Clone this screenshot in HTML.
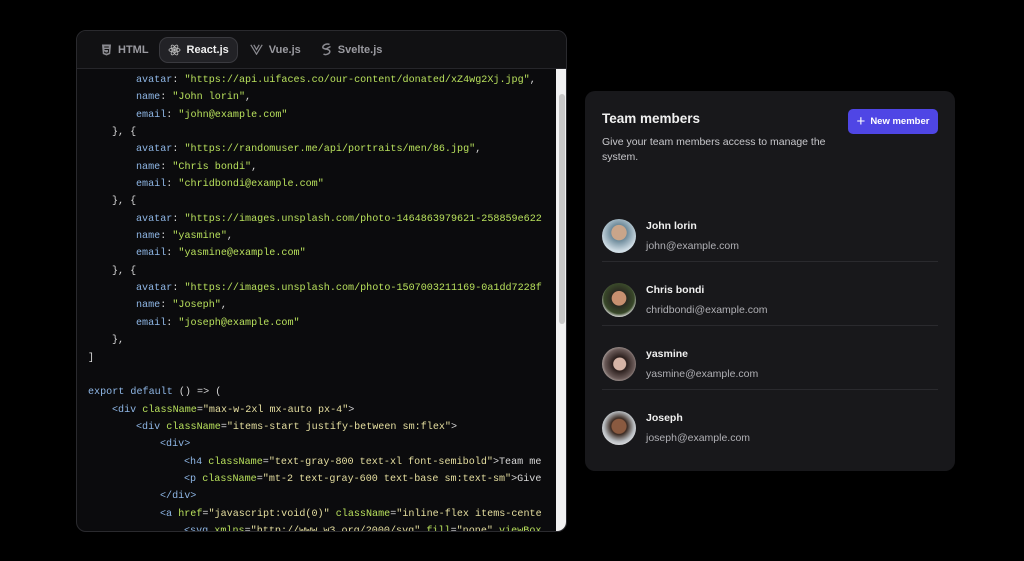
<!DOCTYPE html>
<html><head><meta charset="utf-8"><style>
*{margin:0;padding:0;box-sizing:border-box}
body{width:1024px;height:561px;background:#000;overflow:hidden;font-family:"Liberation Sans",sans-serif;position:relative}
.panel{position:absolute;left:76px;top:30px;width:491px;height:502px;background:#0b0b0d;border:1px solid #2a2a2e;border-radius:10px;overflow:hidden}
.tabs{height:38px;border-bottom:1px solid #26262a;display:flex;align-items:center;padding-left:20px;gap:6px;background:#111113}
.tab{display:flex;align-items:center;gap:6px;color:#9a9aa0;font-size:11px;font-weight:bold;height:26px;padding:0 4px}
.tab.on{background:#222226;border:1px solid #3a3a3f;border-radius:9px;color:#f0f0f0;padding:0 8px}
.code{position:absolute;left:11px;top:41px;width:457px;height:461px;overflow:hidden;font-family:"Liberation Mono",monospace;font-size:10.1px;line-height:17.35px;color:#d8d8d8}
.code div{height:17.35px;white-space:pre}
.i1{padding-left:24px}.i2{padding-left:48px}.i3{padding-left:72px}.i4{padding-left:96px}
.sb{position:absolute;left:479px;top:38px;width:12px;height:464px;background:#f2f2f2}
.th{position:absolute;left:3px;top:25px;width:6px;height:230px;background:#c8c8c8;border-radius:3px}
.k{color:#8fb7e6}.s{color:#b8e05c}.a{color:#b8e05c}.t{color:#8fb7e6}.y{color:#e6dfa0}
.card{position:absolute;left:585px;top:91px;width:370px;height:380px;background:#18181b;border-radius:10px}
h4{position:absolute;left:17px;top:20px;color:#f0f0f0;font-size:13.5px}
.desc{position:absolute;left:17px;top:44px;width:240px;color:#c8c8cc;font-size:10.5px;line-height:15px}
.btn{position:absolute;left:263px;top:18px;width:90px;height:25px;background:#4f46e5;border-radius:5px;color:#fff;font-size:9.5px;font-weight:bold;display:flex;align-items:center;justify-content:center;gap:5px}
.row{position:absolute;left:17px;width:336px;height:64px;border-bottom:1px solid #2a2a2e}
.av{position:absolute;left:0;top:21px;width:34px;height:34px;border-radius:50%}
.nm{position:absolute;left:44px;top:22px;color:#f0f0f0;font-size:10.5px;font-weight:bold}
.em{position:absolute;left:44px;top:42px;color:#b0b0b5;font-size:10.5px}
</style></head><body>
<div class="panel">
<div class="tabs">
<div class="tab"><svg width="11" height="12" viewBox="0 0 11 12"><path d="M1 0.5h9l-0.8 9.5L5.5 11.5 1.8 10z" fill="#8a8a90"/><path d="M3.2 3h4.6M3.5 5.5h4.1l-0.3 3-1.8 0.6-1.8-0.6-0.1-1" stroke="#111" fill="none" stroke-width="1"/></svg>HTML</div>
<div class="tab on"><svg width="13" height="12" viewBox="-7 -6 14 12" fill="none" stroke="#bbb" stroke-width="0.9"><ellipse rx="6" ry="2.3"/><ellipse rx="6" ry="2.3" transform="rotate(60)"/><ellipse rx="6" ry="2.3" transform="rotate(120)"/><circle r="1" fill="#bbb"/></svg>React.js</div>
<div class="tab" style="margin-left:2px"><svg width="13" height="11" viewBox="0 0 13 11" fill="none" stroke="#8a8a90" stroke-width="1.2"><path d="M0.8 0.8L6.5 10.2 12.2 0.8M3.8 0.8L6.5 5.5 9.2 0.8"/></svg>Vue.js</div>
<div class="tab" style="margin-left:6px"><svg width="11" height="13" viewBox="0 0 11 13" fill="none" stroke="#8a8a90" stroke-width="1.5"><path d="M8.5 1.5C6 0 2 2 1.8 4.2 1.6 6.5 8.5 5.5 8.8 8.3 9 10.6 5 12.5 2.5 11M9.5 3.5L4 6.5"/></svg>Svelte.js</div>
</div>
<div class="code"><div class="i2"><span class="k">avatar</span>: <span class="s">"https://api.uifaces.co/our-content/donated/xZ4wg2Xj.jpg"</span>,</div><div class="i2"><span class="k">name</span>: <span class="s">"John lorin"</span>,</div><div class="i2"><span class="k">email</span>: <span class="s">"john@example.com"</span></div><div class="i1">}, {</div><div class="i2"><span class="k">avatar</span>: <span class="s">"https://randomuser.me/api/portraits/men/86.jpg"</span>,</div><div class="i2"><span class="k">name</span>: <span class="s">"Chris bondi"</span>,</div><div class="i2"><span class="k">email</span>: <span class="s">"chridbondi@example.com"</span></div><div class="i1">}, {</div><div class="i2"><span class="k">avatar</span>: <span class="s">"https://images.unsplash.com/photo-1464863979621-258859e622</span></div><div class="i2"><span class="k">name</span>: <span class="s">"yasmine"</span>,</div><div class="i2"><span class="k">email</span>: <span class="s">"yasmine@example.com"</span></div><div class="i1">}, {</div><div class="i2"><span class="k">avatar</span>: <span class="s">"https://images.unsplash.com/photo-1507003211169-0a1dd7228f</span></div><div class="i2"><span class="k">name</span>: <span class="s">"Joseph"</span>,</div><div class="i2"><span class="k">email</span>: <span class="s">"joseph@example.com"</span></div><div class="i1">},</div><div>]</div><div></div><div><span class="k">export default</span> () =&gt; (</div><div class="i1"><span class="t">&lt;div</span> <span class="a">className</span>=<span class="y">"max-w-2xl mx-auto px-4"</span>&gt;</div><div class="i2"><span class="t">&lt;div</span> <span class="a">className</span>=<span class="y">"items-start justify-between sm:flex"</span>&gt;</div><div class="i3"><span class="t">&lt;div&gt;</span></div><div class="i4"><span class="t">&lt;h4</span> <span class="a">className</span>=<span class="y">"text-gray-800 text-xl font-semibold"</span>&gt;Team me</div><div class="i4"><span class="t">&lt;p</span> <span class="a">className</span>=<span class="y">"mt-2 text-gray-600 text-base sm:text-sm"</span>&gt;Give</div><div class="i3"><span class="t">&lt;/div&gt;</span></div><div class="i3"><span class="t">&lt;a</span> <span class="a">href</span>=<span class="y">"javascript:void(0)"</span> <span class="a">className</span>=<span class="y">"inline-flex items-cente</span></div><div class="i4"><span class="t">&lt;svg</span> <span class="a">xmlns</span>=<span class="y">"http://www.w3.org/2000/svg"</span> <span class="a">fill</span>=<span class="y">"none"</span> <span class="a">viewBox</span></div></div>
<div class="sb"><div class="th"></div></div>
</div>
<div class="card">
<h4>Team members</h4>
<div class="desc">Give your team members access to manage the system.</div>
<div class="btn"><span style="font-size:15px;font-weight:normal;line-height:1">+</span>New member</div>
<div class="row" style="top:107px"><div class="av" style="background:radial-gradient(circle at 50% 40%,#c9a58a 0 28%,#6d8a9a 30%,#d0dde5 70%)"></div><div class="nm">John lorin</div><div class="em">john@example.com</div></div>
<div class="row" style="top:171px"><div class="av" style="background:radial-gradient(circle at 50% 45%,#c89070 0 28%,#2a2a22 30%,#3a4a2a 60%,#e8e8e8 75%)"></div><div class="nm">Chris bondi</div><div class="em">chridbondi@example.com</div></div>
<div class="row" style="top:235px"><div class="av" style="background:radial-gradient(circle at 52% 50%,#d6b4a6 0 25%,#2a1e1c 28%,#6a5a58 60%,#c8c0bc 80%)"></div><div class="nm">yasmine</div><div class="em">yasmine@example.com</div></div>
<div class="row" style="top:299px;border:none"><div class="av" style="background:radial-gradient(circle at 50% 45%,#8a5a40 0 28%,#3a2a22 32%,#b8bcc0 60%,#e8e8ea 80%)"></div><div class="nm">Joseph</div><div class="em">joseph@example.com</div></div>
</div>
</body></html>
